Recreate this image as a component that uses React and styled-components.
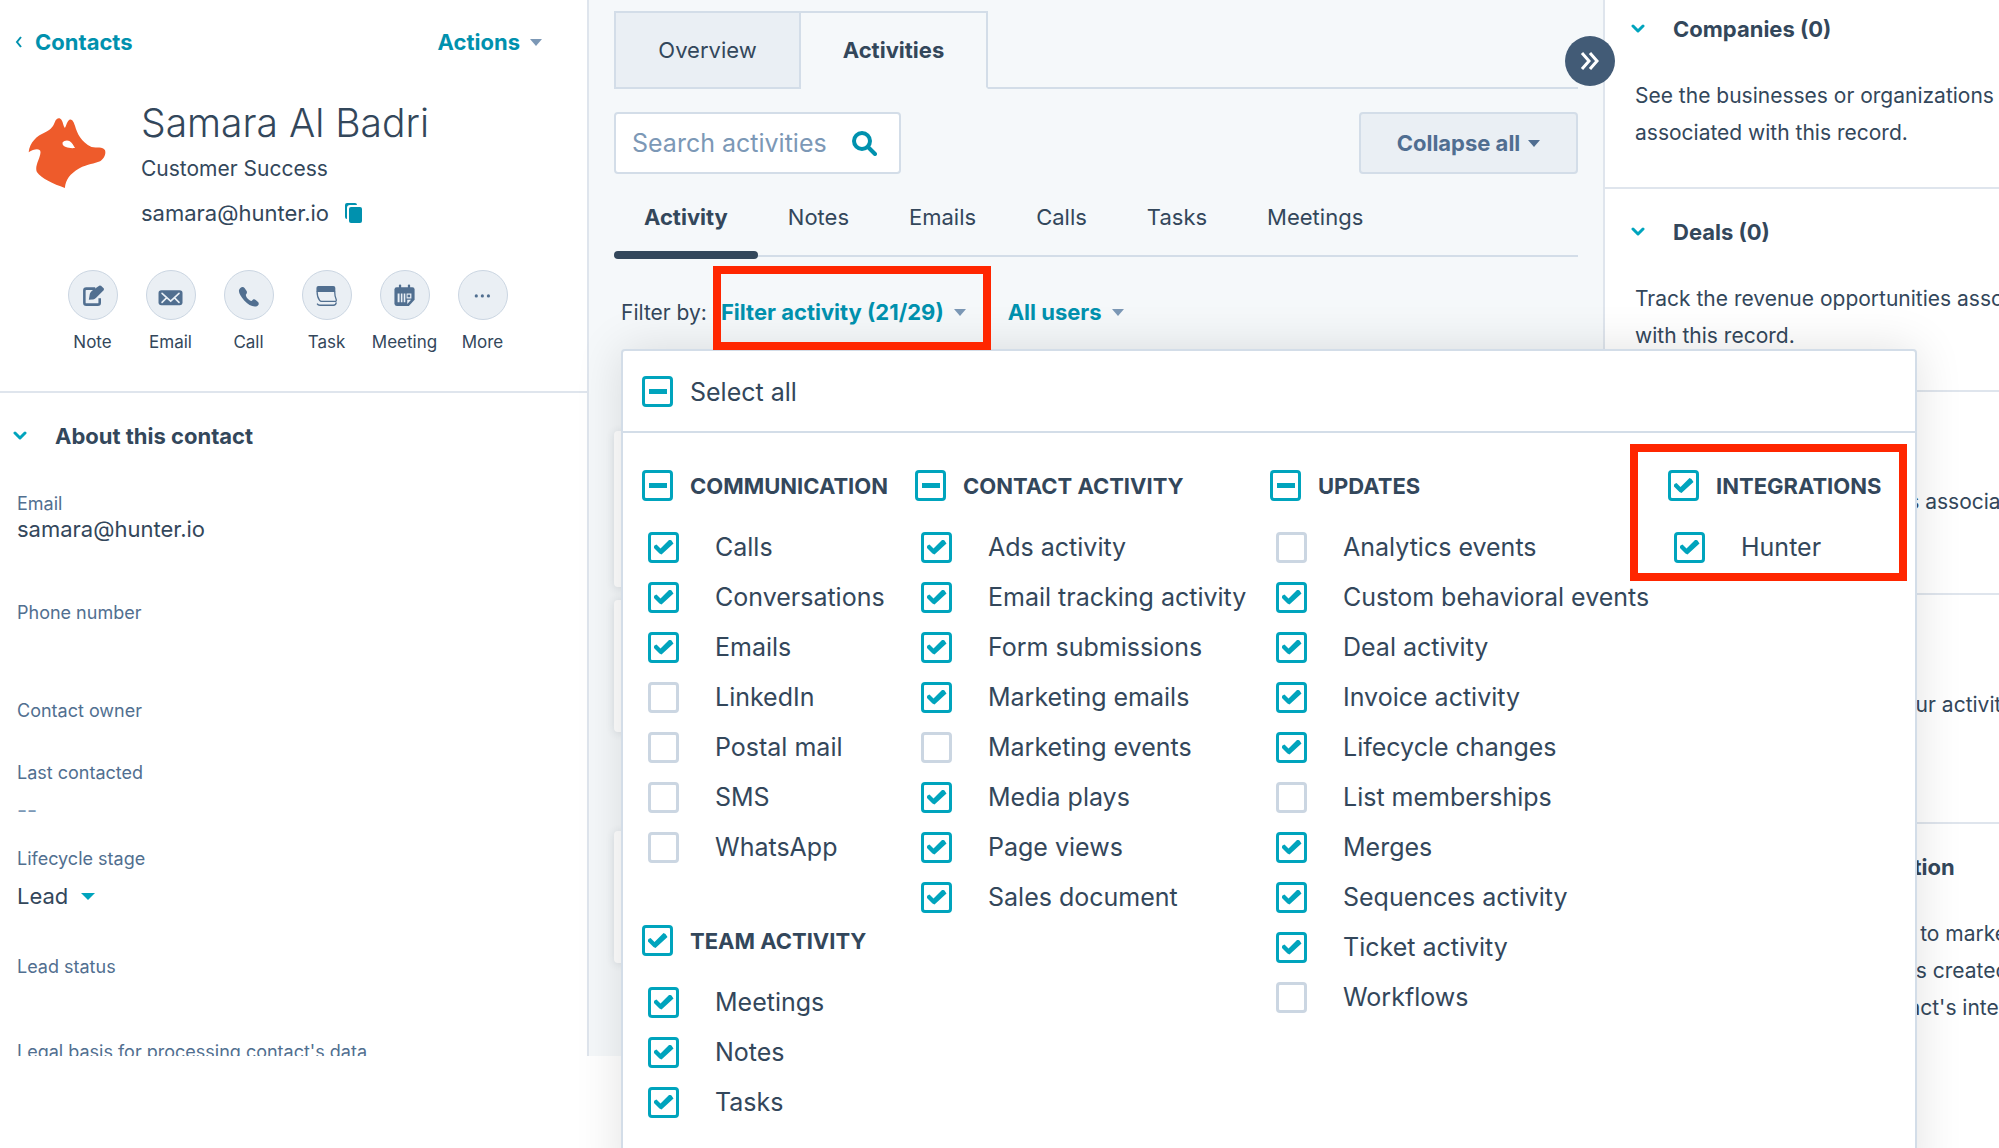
import { useState } from "react";
import styled, { createGlobalStyle } from "styled-components";

const colors = {
  text: "#33475b",
  link: "#0091ae",
  teal: "#00a4bd",
  label: "#516f90",
  muted: "#7c98b6",
  box: "#cbd6e2",
  border: "#d3dde8",
  line: "#dfe5ed",
  panel: "#f5f8fa",
  fill: "#eaeff4",
  mark: "#ff2600",
};

const GlobalStyle = createGlobalStyle`
  * {
    box-sizing: border-box;
  }
  body {
    margin: 0;
    overflow: hidden;
    background: #ffffff;
    color: ${colors.text};
    font-family: Inter, "Liberation Sans", sans-serif;
    font-size: 21px;
  }
  button,
  input,
  select {
    margin: 0;
    padding: 0;
    border: 0;
    background: none;
    color: inherit;
    font: inherit;
  }
  h1, h2, p, ul, dl, dd {
    margin: 0;
    padding: 0;
  }
`;

const Page = styled.div`
  height: 100vh;
  overflow: hidden;
`;
const Workspace = styled.div`
  display: flex;
  height: calc(100vh - 92px);
`;

// shared bits
const Caret = styled.span`
  display: inline-block;
  border: ${props => props.$size || 6}px solid transparent;
  border-top: 7px solid ${props => props.$color || colors.muted};
  border-bottom: 0;
`;
const LinkButton = styled.button`
  display: flex;
  align-items: center;
  gap: 10px;
  color: ${colors.link};
  font-size: 22px;
  font-weight: 700;
  line-height: 28px;
  white-space: nowrap;
`;
const Chevron = () => (
  <svg width="14" height="10" viewBox="0 0 14 10" aria-hidden="true">
    <path
      d="M2 2l5 5 5-5"
      fill="none"
      stroke={colors.teal}
      strokeWidth="3"
      strokeLinecap="round"
      strokeLinejoin="round"
    />
  </svg>
);
const SectionToggle = styled.button`
  display: flex;
  align-items: center;
  gap: 28px;
  font-size: 22px;
  font-weight: 700;
  line-height: 28px;
  white-space: nowrap;
`;

// left column
const ContactPanel = styled.aside`
  flex: 0 0 589px;
  overflow: hidden;
  border-right: 2px solid ${colors.line};
`;
const TopBar = styled.div`
  display: flex;
  justify-content: space-between;
  padding: 28px 45px 0 15px;
`;
const BackLink = styled.a`
  display: flex;
  align-items: center;
  gap: 12px;
  color: ${colors.link};
  font-size: 22px;
  font-weight: 700;
  line-height: 28px;
  text-decoration: none;
`;
const Profile = styled.div`
  display: flex;
  gap: 35px;
  padding: 42px 28px 0;
`;
const Avatar = styled.svg`
  flex: none;
  margin-top: 19px;
`;
const Name = styled.h1`
  font-size: 39px;
  font-weight: 300;
  line-height: 49px;
`;
const ProfileLine = styled.p`
  display: flex;
  align-items: center;
  gap: 16px;
  font-size: ${props => (props.$email ? 22 : 21)}px;
  line-height: 44px;
`;
const CopyButton = styled.button`
  display: flex;
`;
const QuickActions = styled.div`
  display: flex;
  justify-content: center;
  margin-top: 35px;
  padding: 0 25px 37px 13px;
  border-bottom: 2px solid ${colors.line};
`;
const QuickAction = styled.button`
  display: flex;
  flex-direction: column;
  align-items: center;
  gap: 10px;
  width: 78px;
  font-size: 17px;
  line-height: 24px;
`;
const Circle = styled.span`
  display: flex;
  width: 50px;
  height: 50px;
  border: 1px solid ${colors.box};
  border-radius: 50%;
  background: ${colors.fill};
`;
const About = styled.section`
  padding: 29px 13px 0;
`;
const Fields = styled.dl`
  padding: 42px 4px 0;
`;
const Field = styled.div`
  padding-bottom: ${props => props.$space}px;
`;
const FieldLabel = styled.dt`
  color: ${colors.label};
  font-size: 18px;
  line-height: 24px;
`;
const FieldValue = styled.dd`
  margin-top: ${props => (props.$spaced ? 12 : 0)}px;
  color: ${props => (props.$empty ? colors.muted : colors.text)};
  font-size: 22px;
  line-height: 26px;
`;
const SelectWrap = styled.label`
  display: inline-flex;
  align-items: center;
  gap: 12px;
`;
const StageSelect = styled.select`
  appearance: none;
  line-height: 26px;
`;

// middle column
const Timeline = styled.main`
  position: relative;
  flex: 1;
  min-width: 0;
  padding: 11px 25px 0;
  background: ${colors.panel};
`;
const Tabs = styled.div`
  display: flex;
`;
const Tab = styled.button`
  width: 187px;
  height: 78px;
  border: 2px solid ${colors.border};
  border-bottom-color: ${props => (props.$active ? "transparent" : colors.border)};
  background: ${props => (props.$active ? "transparent" : colors.fill)};
  font-size: 22px;
  font-weight: ${props => (props.$active ? 700 : 400)};
  & + & {
    border-left: 0;
  }
`;
const TabFiller = styled.div`
  flex: 1;
  border-bottom: 2px solid ${colors.border};
`;
const Toolbar = styled.div`
  display: flex;
  justify-content: space-between;
  margin-top: 23px;
`;
const SearchBox = styled.div`
  display: flex;
  align-items: center;
  width: 287px;
  height: 62px;
  padding: 0 22px 0 16px;
  border: 2px solid ${colors.border};
  border-radius: 4px;
  background: #ffffff;
`;
const SearchInput = styled.input`
  flex: 1;
  min-width: 0;
  outline: none;
  font-size: 25px;
  &::placeholder {
    color: ${colors.muted};
  }
`;
const SearchButton = styled.button`
  display: flex;
`;
const CollapseButton = styled.button`
  display: flex;
  align-items: center;
  justify-content: center;
  gap: 8px;
  width: 219px;
  border: 2px solid ${colors.border};
  border-radius: 4px;
  background: ${colors.fill};
  color: #506e91;
  font-size: 22px;
  font-weight: 700;
`;
const SubTabs = styled.div`
  display: flex;
  height: 83px;
  border-bottom: 2px solid ${colors.border};
`;
const SubTab = styled.button`
  position: relative;
  height: 85px;
  padding: 0 30px;
  font-size: 22px;
  font-weight: ${props => (props.$active ? 700 : 400)};
  &::after {
    content: "";
    position: absolute;
    right: 0;
    bottom: 0;
    left: 0;
    height: 8px;
    border-radius: 4px;
    background: ${props => (props.$active ? colors.text : "transparent")};
  }
`;
const FilterBar = styled.div`
  position: relative;
  display: flex;
  align-items: center;
  gap: 14px;
  height: 92px;
  padding: 18px 7px 0;
`;
const FilterTrigger = styled.div`
  position: relative;
  margin-right: 28px;
`;
const Highlight = styled.span`
  position: absolute;
  z-index: 3;
  inset: ${props => props.$inset};
  border: 8px solid ${colors.mark};
  pointer-events: none;
`;
const Card = styled.div`
  height: ${props => props.$height}px;
  margin-bottom: ${props => props.$gap}px;
  border-radius: 4px;
  background: #ffffff;
  box-shadow: 0 1px 8px rgba(45, 62, 80, 0.12);
`;
const Cards = styled.div`
  margin-top: 82px;
`;
const SidebarToggle = styled.button`
  position: absolute;
  z-index: 1;
  top: 36px;
  right: -12px;
  display: flex;
  align-items: center;
  justify-content: center;
  width: 50px;
  height: 50px;
  border-radius: 50%;
  background: #425b76;
`;

// filter popover
const Popover = styled.div`
  position: absolute;
  z-index: 2;
  top: 92px;
  left: 7px;
  width: calc(100vw - 703px);
  min-height: 840px;
  border: 2px solid ${colors.border};
  border-radius: 4px;
  background: #ffffff;
  box-shadow: 0 0 48px rgba(0, 0, 0, 0.12);
`;
const PopoverHeader = styled.div`
  padding: 25px 19px 24px;
  border-bottom: 2px solid ${colors.border};
`;
const Groups = styled.div`
  display: grid;
  grid-template-columns: 273fr 355fr 398fr 247fr;
  padding: 37px 0 0 19px;
`;
const Group = styled.fieldset`
  position: relative;
  min-width: 0;
  margin: 0 0 53px;
  padding: 0;
  border: 0;
`;
const Options = styled.ul`
  padding: 21px 0 0 6px;
  list-style: none;
`;
const CheckLabel = styled.label`
  display: flex;
  align-items: center;
  gap: ${props => (props.$nested ? 36 : 17)}px;
  height: ${props => (props.$nested ? 50 : 31)}px;
  font-size: ${props => (props.$heading ? 22 : 25)}px;
  font-weight: ${props => (props.$heading ? 700 : 400)};
  text-transform: ${props => (props.$heading ? "uppercase" : "none")};
  white-space: nowrap;
`;
const CheckInput = styled.input`
  display: grid;
  flex: none;
  place-items: center;
  width: 31px;
  height: 31px;
  border: 3px solid ${colors.box};
  border-radius: 4px;
  background: #ffffff;
  appearance: none;
  &:checked,
  &:indeterminate {
    border-color: ${colors.teal};
  }
  &:checked::before {
    content: "";
    width: 20px;
    height: 15px;
    background: ${colors.teal};
    clip-path: path("M1 6 L3 5 L7 9 L16 0 L18 1 L20 4 L8 15 L6 14 L0 8 Z");
  }
  &:indeterminate::before {
    content: "";
    width: 18px;
    height: 5px;
    background: ${colors.teal};
  }
`;

// right column
const Associations = styled.aside`
  flex: 0 0 396px;
  overflow: hidden;
  border-left: 2px solid ${colors.line};
`;
const Association = styled.section`
  padding: ${props => (props.$first ? 15 : 29)}px 0 ${props => props.$bottom || 36}px 26px;
  border-bottom: 2px solid ${props => (props.$last ? "transparent" : colors.line)};
`;
const AssociationText = styled.p`
  padding: 34px 0 0 4px;
  line-height: 37px;
  white-space: pre;
`;

const actions = [
  {
    name: "Note",
    icon: (
      <>
        <path d="M82 55H54a6 6 0 0 0-6 6v38a6 6 0 0 0 6 6h36a6 6 0 0 0 6-6V85" fill="none" stroke="#516f90" strokeWidth="8" />
        <path d="M62 90l3-18c1-5 5-9 9-12l18-12 4-3 4 1 9 9v4l-25 25c-4 3-8 5-12 5z" />
      </>
    ),
  },
  {
    name: "Email",
    icon: (
      <>
        <rect x="36" y="60" width="75" height="47" rx="9" />
        <path d="M47 70l27 24 26-24M47 98l14-14M100 98L86 84" fill="none" stroke="#eaf0f6" strokeWidth="5" strokeLinecap="round" />
      </>
    ),
  },
  {
    name: "Call",
    icon: (
      <path d="M48 53C52 49 58 49 61 53L67 62C70 66 69 70 65 74C66 84 75 91 83 94L87 90C90 88 93 88 96 91L104 98C107 102 105 107 101 109C90 114 74 108 60 92C46 76 38 62 48 53Z" />
    ),
  },
  {
    name: "Task",
    icon: (
      <>
        <path d="M42 53q0-6 6-6h47q6 0 6 6v13H42z" />
        <path d="M44 64q0 18 8 28 2 3 6 3h44q3-1 2-5-5-12-5-26M44 102q3 5 9 5h42q8 0 9-9" fill="none" stroke="#516f90" strokeWidth="4" />
      </>
    ),
  },
  {
    name: "Meeting",
    icon: (
      <>
        <rect x="56" y="42" width="7" height="16" rx="3" />
        <rect x="84" y="42" width="7" height="16" rx="3" />
        <path d="M49 51H98q7 0 7 7V90L87 109H50q-8 0-8-8V58q0-7 7-7z" />
        <path d="M52 70h6v28h-6zM62 70h5v28h-5zM71 70h5v28h-5zM80 70h15v16H80zM82 90h12l-12 13z" fill="#eaf0f6" />
        <rect x="83" y="74" width="8" height="8" />
      </>
    ),
  },
  {
    name: "More",
    icon: (
      <>
        <circle cx="54" cy="78" r="5" />
        <circle cx="73" cy="78" r="5" />
        <circle cx="92" cy="78" r="5" />
      </>
    ),
  },
];

const subTabs = ["Activity", "Notes", "Emails", "Calls", "Tasks", "Meetings"];

const columns = [
  [
    {
      title: "Communication",
      state: "some",
      options: [
        ["Calls", true],
        ["Conversations", true],
        ["Emails", true],
        ["LinkedIn", false],
        ["Postal mail", false],
        ["SMS", false],
        ["WhatsApp", false],
      ],
    },
    {
      title: "Team activity",
      state: "all",
      options: [
        ["Meetings", true],
        ["Notes", true],
        ["Tasks", true],
      ],
    },
  ],
  [
    {
      title: "Contact activity",
      state: "some",
      options: [
        ["Ads activity", true],
        ["Email tracking activity", true],
        ["Form submissions", true],
        ["Marketing emails", true],
        ["Marketing events", false],
        ["Media plays", true],
        ["Page views", true],
        ["Sales document", true],
      ],
    },
  ],
  [
    {
      title: "Updates",
      state: "some",
      options: [
        ["Analytics events", false],
        ["Custom behavioral events", true],
        ["Deal activity", true],
        ["Invoice activity", true],
        ["Lifecycle changes", true],
        ["List memberships", false],
        ["Merges", true],
        ["Sequences activity", true],
        ["Ticket activity", true],
        ["Workflows", false],
      ],
    },
  ],
  [
    {
      title: "Integrations",
      state: "all",
      marked: true,
      options: [["Hunter", true]],
    },
  ],
];

const associations = [
  {
    title: "Companies (0)",
    text: "See the businesses or organizations\nassociated with this record.",
  },
  {
    title: "Deals (0)",
    text: "Track the revenue opportunities associated\nwith this record.",
  },
  {
    title: "Tickets (0)",
    text: "Track the customer requests associated\nwith this record.",
  },
  {
    title: "Attachments",
    text: "See any files uploaded to your activities or\nattached to this record.",
    bottom: 62,
  },
  {
    title: "Contact source attribution",
    text: "Give credit for new contacts to marketing\nefforts. When each contact is created, the\ncredit is shared for the contact's interactions.",
  },
];

const Checkbox = ({ label, state, heading, nested }) => {
  const setIndeterminate = el => {
    if (el) el.indeterminate = state === "some";
  };
  return (
    <CheckLabel $heading={heading} $nested={nested}>
      <CheckInput
        type="checkbox"
        defaultChecked={state === "all"}
        ref={setIndeterminate}
      />
      {label}
    </CheckLabel>
  );
};

const FilterPopover = () => (
  <Popover>
    <PopoverHeader>
      <Checkbox label="Select all" state="some" />
    </PopoverHeader>
    <Groups>
      {columns.map((groups, index) => (
        <div key={index}>
          {groups.map(group => (
            <Group key={group.title}>
              {group.marked && <Highlight $inset="-26px 8px -9px -38px" />}
              <Checkbox label={group.title} state={group.state} heading />
              <Options>
                {group.options.map(([label, checked]) => (
                  <li key={label}>
                    <Checkbox
                      label={label}
                      state={checked ? "all" : "none"}
                      nested
                    />
                  </li>
                ))}
              </Options>
            </Group>
          ))}
        </div>
      ))}
    </Groups>
  </Popover>
);

const ContactSidebar = () => (
  <ContactPanel>
    <TopBar>
      <BackLink href="#contacts">
        <svg width="8" height="12" viewBox="0 0 8 12" aria-hidden="true">
          <path d="M6 1L2 6l4 5" fill="none" stroke={colors.link} strokeWidth="2" />
        </svg>
        Contacts
      </BackLink>
      <LinkButton>
        Actions <Caret />
      </LinkButton>
    </TopBar>
    <Profile>
      <Avatar width="78" height="72" viewBox="53 52 237 216" aria-hidden="true">
        <path
          fill="#ee5b2b"
          fillRule="evenodd"
          d="M55 158C58 128 80 108 104 98C125 88 131 76 135 65C139 53 150 51 155 60C160 68 160 78 165 84C170 77 171 64 179 59C187 56 192 66 196 78C202 100 214 126 246 142C262 145 280 140 287 152C291 164 283 178 272 185C254 193 236 192 208 207C180 224 168 240 165 266C130 255 92 236 80 218C72 200 90 178 91 158C91 144 70 148 55 158ZM158 128C162 121 174 120 180 124C188 130 192 138 196 145C180 147 160 143 158 133Z"
        />
      </Avatar>
      <div>
        <Name>Samara Al Badri</Name>
        <ProfileLine>Customer Success</ProfileLine>
        <ProfileLine $email>
          samara@hunter.io
          <CopyButton aria-label="Copy email">
            <svg width="17" height="20" viewBox="0 0 17 20" aria-hidden="true">
              <path d="M2 0h8a2 2 0 0 1 2 2H5a3 3 0 0 0-3 3v11a2 2 0 0 1-2-2V2a2 2 0 0 1 2-2z" fill={colors.link} />
              <rect x="4" y="4" width="13" height="16" rx="2" fill={colors.link} />
            </svg>
          </CopyButton>
        </ProfileLine>
      </div>
    </Profile>
    <QuickActions>
      {actions.map(action => (
        <QuickAction key={action.name}>
          <Circle>
            <svg viewBox="0 0 150 150" fill="#516f90" aria-hidden="true">
              {action.icon}
            </svg>
          </Circle>
          {action.name}
        </QuickAction>
      ))}
    </QuickActions>
    <About>
      <SectionToggle>
        <Chevron />
        About this contact
      </SectionToggle>
      <Fields>
        <Field $space={59}>
          <FieldLabel>Email</FieldLabel>
          <FieldValue>samara@hunter.io</FieldValue>
        </Field>
        <Field $space={74}>
          <FieldLabel>Phone number</FieldLabel>
        </Field>
        <Field $space={38}>
          <FieldLabel>Contact owner</FieldLabel>
        </Field>
        <Field $space={24}>
          <FieldLabel>Last contacted</FieldLabel>
          <FieldValue $spaced $empty>
            --
          </FieldValue>
        </Field>
        <Field $space={46}>
          <FieldLabel>Lifecycle stage</FieldLabel>
          <FieldValue $spaced>
            <SelectWrap>
              <StageSelect aria-label="Lifecycle stage">
                <option>Lead</option>
              </StageSelect>
              <Caret $color={colors.teal} $size={7} />
            </SelectWrap>
          </FieldValue>
        </Field>
        <Field $space={61}>
          <FieldLabel>Lead status</FieldLabel>
        </Field>
        <Field $space={0}>
          <FieldLabel>Legal basis for processing contact's data</FieldLabel>
        </Field>
      </Fields>
    </About>
  </ContactPanel>
);

const App = () => {
  const [tab, setTab] = useState("Activities");
  const [subTab, setSubTab] = useState("Activity");

  return (
    <Page>
      <GlobalStyle />
      <Workspace>
        <ContactSidebar />
        <Timeline>
          <Tabs>
            {["Overview", "Activities"].map(name => (
              <Tab key={name} $active={name === tab} onClick={() => setTab(name)}>
                {name}
              </Tab>
            ))}
            <TabFiller />
          </Tabs>
          <SidebarToggle aria-label="Hide sidebar">
            <svg width="20" height="18" viewBox="0 0 20 18" aria-hidden="true">
              <path d="M2 1l7 8-7 8M10 1l7 8-7 8" fill="none" stroke="#ffffff" strokeWidth="3" />
            </svg>
          </SidebarToggle>
          <Toolbar>
            <SearchBox>
              <SearchInput
                type="text"
                aria-label="Search activities"
                placeholder="Search activities"
              />
              <SearchButton aria-label="Search">
                <svg width="26" height="26" viewBox="0 0 26 26" aria-hidden="true">
                  <circle cx="11" cy="11" r="8" fill="none" stroke={colors.link} strokeWidth="4" />
                  <path d="M17 17l7 7" stroke={colors.link} strokeWidth="4" strokeLinecap="round" />
                </svg>
              </SearchButton>
            </SearchBox>
            <CollapseButton>
              Collapse all <Caret $color="#506e91" />
            </CollapseButton>
          </Toolbar>
          <SubTabs>
            {subTabs.map(name => (
              <SubTab
                key={name}
                $active={name === subTab}
                onClick={() => setSubTab(name)}>
                {name}
              </SubTab>
            ))}
          </SubTabs>
          <FilterBar>
            <span>Filter by:</span>
            <FilterTrigger>
              <LinkButton aria-haspopup="true" aria-expanded="true">
                Filter activity (21/29) <Caret />
              </LinkButton>
              <Highlight $inset="-32px -25px -24px -8px" />
            </FilterTrigger>
            <LinkButton aria-haspopup="true">
              All users <Caret />
            </LinkButton>
            <FilterPopover />
          </FilterBar>
          <Cards>
            <Card $height={156} $gap={13} />
            <Card $height={132} $gap={99} />
            <Card $height={132} $gap={0} />
          </Cards>
        </Timeline>
        <Associations>
          {associations.map((item, index) => (
            <Association
              key={item.title}
              $first={index === 0}
              $last={index === associations.length - 1}
              $bottom={item.bottom}>
              <SectionToggle>
                <Chevron />
                {item.title}
              </SectionToggle>
              <AssociationText>{item.text}</AssociationText>
            </Association>
          ))}
        </Associations>
      </Workspace>
    </Page>
  );
};

export default App;
